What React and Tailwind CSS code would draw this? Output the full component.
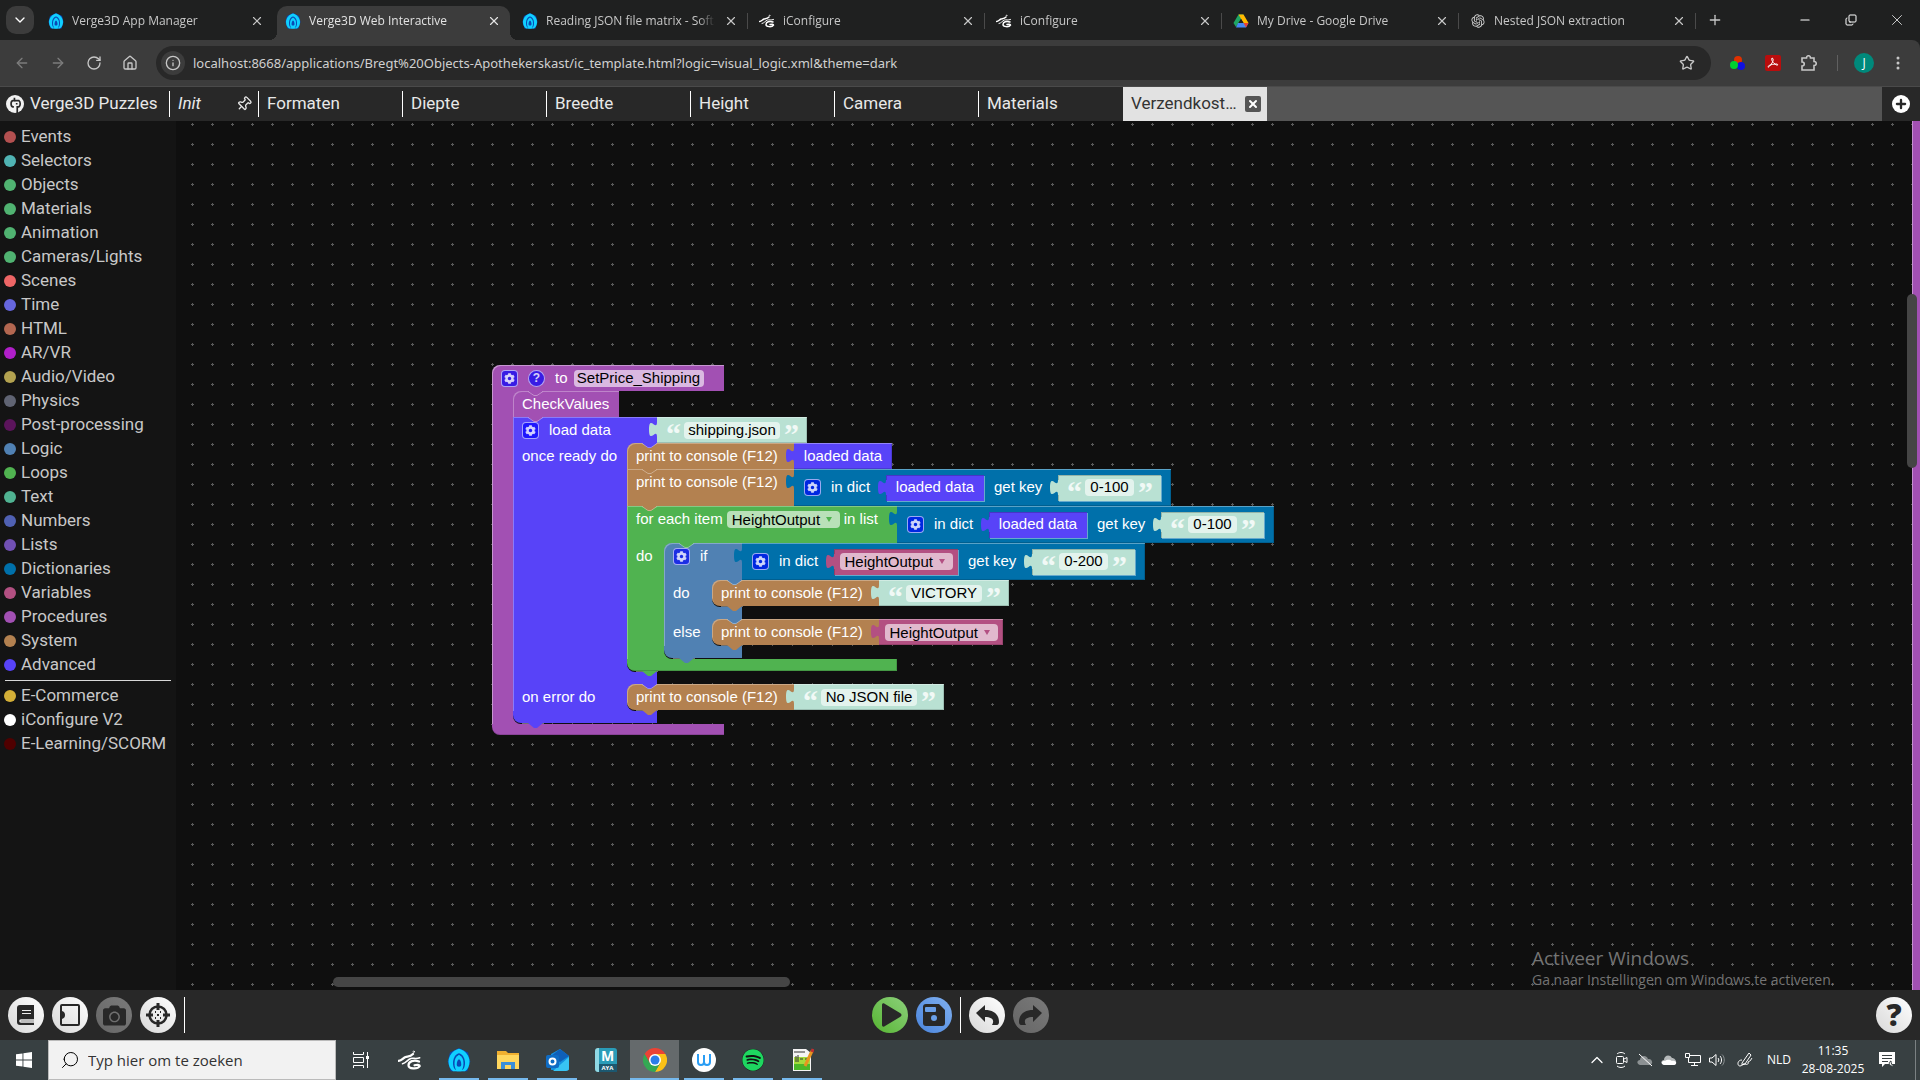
import { useState } from "react";
import {
  ArrowLeft,
  ArrowRight,
  ChevronDown,
  ChevronUp,
  Copy,
  House,
  Info,
  Minus,
  Pin,
  Plus,
  RotateCw,
  Search,
  Star,
  X,
} from "lucide-react";
import { FaCog, FaSpotify, FaCamera } from "react-icons/fa";
import { RiOpenaiFill } from "react-icons/ri";

const browserTabs = [
  { title: "Verge3D App Manager", icon: "verge" },
  { title: "Verge3D Web Interactive", icon: "verge" },
  { title: "Reading JSON file matrix - Soft8", icon: "verge" },
  { title: "iConfigure", icon: "iconfigure" },
  { title: "iConfigure", icon: "iconfigure" },
  { title: "My Drive - Google Drive", icon: "drive" },
  { title: "Nested JSON extraction", icon: "openai" },
];

const puzzleTabs = ["Formaten", "Diepte", "Breedte", "Height", "Camera", "Materials"];

const categories = [
  { name: "Events", color: "bg-[#b35050]" },
  { name: "Selectors", color: "bg-[#50b3b3]" },
  { name: "Objects", color: "bg-[#50b371]" },
  { name: "Materials", color: "bg-[#50b371]" },
  { name: "Animation", color: "bg-[#50b371]" },
  { name: "Cameras/Lights", color: "bg-[#50b371]" },
  { name: "Scenes", color: "bg-[#ee6666]" },
  { name: "Time", color: "bg-[#6666dd]" },
  { name: "HTML", color: "bg-[#b36750]" },
  { name: "AR/VR", color: "bg-[#b01fc9]" },
  { name: "Audio/Video", color: "bg-[#b3a250]" },
  { name: "Physics", color: "bg-[#606473]" },
  { name: "Post-processing", color: "bg-[#5b145b]" },
  { name: "Logic", color: "bg-[#5081b3]" },
  { name: "Loops", color: "bg-[#50b350]" },
  { name: "Text", color: "bg-[#50b392]" },
  { name: "Numbers", color: "bg-[#5061b3]" },
  { name: "Lists", color: "bg-[#7150b3]" },
  { name: "Dictionaries", color: "bg-[#0070aa]" },
  { name: "Variables", color: "bg-[#b35082]" },
  { name: "Procedures", color: "bg-[#a250b3]" },
  { name: "System", color: "bg-[#b38150]" },
  { name: "Advanced", color: "bg-[#5843f8]" },
];

const extraCategories = [
  { name: "E-Commerce", color: "bg-[#d4af37]" },
  { name: "iConfigure V2", color: "bg-white" },
  { name: "E-Learning/SCORM", color: "bg-[#500000]" },
];

/* ---------- logos ---------- */

const VergeLogo = ({ className }) => (
  <svg viewBox="0 0 32 32" className={className}>
    <path d="M16 0 L28 6 L31 18 L27 31 H5 L1 18 L4 6 Z" fill="#0a48b4" />
    <path d="M16 1 C24 3 30 10 30 18 C30 24 28 28 24 31 H8 C4 28 2 24 2 18 C2 10 8 3 16 1 Z" fill="#10d0ff" />
    <path d="M16 7 C21 8 24 14 24 20 C24 24 23 27 21 29 H11 C9 27 8 24 8 20 C8 14 11 8 16 7 Z" fill="#0a48b4" />
    <path d="M16 9 C20 11 22 15 22 20 C22 25 21 28 19 31 H13 C11 28 10 25 10 20 C10 15 12 11 16 9 Z" fill="#10d0ff" />
    <path d="M16 15 C18 16 19 19 19 22 C19 24 18 25 16 25 C14 25 13 24 13 22 C13 19 14 16 16 15 Z" fill="#0a48b4" />
  </svg>
);

const IConfigureLogo = ({ className }) => (
  <svg viewBox="0 0 32 32" className={className} fill="none" stroke="#fff" strokeLinecap="round">
    <path d="M1 17 C5 17 6 14 10 12 C13 11 16 12 20 8" strokeWidth="3" />
    <path d="M6 21 C11 20 12 16 17 14 C20 13 24 15 29 13" strokeWidth="2" />
    <path d="M28 18 C21 15 14 18 14 23 C14 28 26 29 29 24 C29 22 25 22 22 23" strokeWidth="3" />
    <circle cx="21" cy="5" r="1" strokeWidth="1" />
  </svg>
);

const DriveLogo = ({ className }) => (
  <svg viewBox="0 0 32 32" className={className}>
    <path d="M11 3 H21 L16 12 L6 28 L1 20 Z" fill="#1fa463" />
    <path d="M11 3 H21 L31 20 H21 Z" fill="#ffba00" />
    <path d="M10 20 H31 L26 29 H6 Z" fill="#4688f4" />
    <path d="M21 20 H31 L26 29 Z" fill="#ea4335" />
    <path d="M16 12 L21 20 H11 Z" fill="#1f2020" />
  </svg>
);

const ChromeLogo = ({ className }) => (
  <svg viewBox="0 0 48 48" className={className}>
    <path d="M3.2 12 A24 24 0 0 1 44.8 12 H24 L13.6 30 Z" fill="#ea4335" />
    <path d="M44.8 12 A24 24 0 0 1 24 48 L34.4 30 L24 12 Z" fill="#fbc116" />
    <path d="M24 48 A24 24 0 0 1 3.2 12 L13.6 30 H34.4 Z" fill="#34a853" />
    <circle cx="24" cy="24" r="12" fill="#fff" />
    <circle cx="24" cy="24" r="9" fill="#2b7de9" />
  </svg>
);

const PuzzleLogo = ({ className }) => (
  <svg viewBox="0 0 32 32" className={className}>
    <circle cx="16" cy="16" r="16" fill="#f2f2f2" />
    <path d="M15 5 V10 H12 C8 11 8 20 12 21 H14" fill="none" stroke="#282828" strokeWidth="3" />
    <path d="M15 10 H23 C26 12 26 19 23 21 H20 V32 M19 14 V17" fill="none" stroke="#282828" strokeWidth="3" />
  </svg>
);

const TabIcon = ({ name }) => {
  if (name === "verge") return <VergeLogo className="size-4 shrink-0" />;
  if (name === "iconfigure") return <IConfigureLogo className="size-4 shrink-0" />;
  if (name === "drive") return <DriveLogo className="size-4 shrink-0" />;
  return <RiOpenaiFill className="size-4 shrink-0 text-[#d0d0d0]" />;
};

/* ---------- browser chrome ---------- */

const BrowserTabs = () => (
  <div className="flex h-10 items-end bg-[#1f2020] text-[12px] text-[#c7c7c7]">
    <button
      aria-label="Search tabs"
      className="mx-[6px] mb-[6px] flex size-7 items-center justify-center rounded-[10px] bg-[#3c3c3c]"
    >
      <ChevronDown className="size-4 text-white" />
    </button>
    {browserTabs.map((tab, index) => {
      const active = index === 1;
      return (
        <div key={index} className="relative flex h-[34px] min-w-0 shrink basis-[237px] items-center pr-1">
          {active && (
            <>
              <span className="absolute -left-2 bottom-0 size-2 bg-[radial-gradient(circle_at_0_0,#1f2020_8px,#3c3c3c_8px)]" />
              <span className="absolute -right-1 bottom-0 size-2 bg-[radial-gradient(circle_at_100%_0,#1f2020_8px,#3c3c3c_8px)]" />
            </>
          )}
          <div
            className={
              active
                ? "flex h-full w-full items-center gap-2 rounded-t-[10px] bg-[#3c3c3c] px-2 pb-1 text-[#e3e3e3]"
                : "flex h-full w-full items-center gap-2 px-2 pb-1"
            }
          >
            <TabIcon name={tab.icon} />
            <span className="w-[172px] overflow-hidden whitespace-nowrap mask-r-from-90%">{tab.title}</span>
            <button aria-label="Close tab" className="flex size-4 shrink-0 items-center justify-center">
              <X className="size-[14px]" />
            </button>
          </div>
          {index > 1 && <span className="mb-1 h-4 w-px shrink-0 bg-[#4a4a4a]" />}
        </div>
      );
    })}
    <button aria-label="New tab" className="mb-3 ml-2 flex size-4 items-center justify-center">
      <Plus className="size-4" />
    </button>
    <div className="ml-auto flex h-full items-center text-white">
      <button aria-label="Minimize" className="flex h-full w-[46px] items-center justify-center">
        <Minus className="size-[14px]" />
      </button>
      <button aria-label="Restore" className="flex h-full w-[46px] items-center justify-center">
        <Copy className="size-3 -scale-x-100 rotate-180" />
      </button>
      <button aria-label="Close" className="flex h-full w-[46px] items-center justify-center">
        <X className="size-[18px]" strokeWidth={1} />
      </button>
    </div>
  </div>
);

const AddressBar = () => {
  const [url, setUrl] = useState(
    "localhost:8668/applications/Bregt%20Objects-Apothekerskast/ic_template.html?logic=visual_logic.xml&theme=dark"
  );

  return (
    <div className="flex h-[47px] items-center rounded-tr-[8px] border-b border-[#4a4a4a] bg-[#3c3c3c] px-[14px] text-[#c7c7c7]">
      <div className="flex w-[142px] gap-5">
        <button aria-label="Back" className="text-[#7c7c7c]"><ArrowLeft className="size-4" /></button>
        <button aria-label="Forward" className="text-[#7c7c7c]"><ArrowRight className="size-4" /></button>
        <button aria-label="Reload"><RotateCw className="size-4" /></button>
        <button aria-label="Home"><House className="size-4" /></button>
      </div>
      <div className="flex h-[34px] flex-1 items-center rounded-full bg-[#282828] pl-[5px] pr-4">
        <button aria-label="Site information" className="flex size-6 items-center justify-center rounded-full bg-[#3c3c3c]">
          <Info className="size-4" />
        </button>
        <input
          aria-label="Address"
          value={url}
          onChange={(e) => setUrl(e.target.value)}
          className="h-6 flex-1 bg-transparent px-2 font-['Noto_Sans',sans-serif] text-[13px] text-[#d0d0d0] outline-none"
        />
        <button aria-label="Bookmark"><Star className="size-4" /></button>
      </div>
      <div className="flex items-center gap-5 pl-[18px]">
        <svg viewBox="0 0 16 16" className="size-4">
          <circle cx="9" cy="5" r="4" fill="#e03000" />
          <circle cx="12" cy="11" r="4" fill="#1010e0" />
          <circle cx="5" cy="10" r="4" fill="#00d030" />
        </svg>
        <svg viewBox="0 0 16 16" className="size-4">
          <rect width="16" height="16" rx="2" fill="#b90d0d" />
          <path d="M7 3 C9 3 8 7 7 8 C5 11 3 13 3 12 C3 10 8 9 12 9 C14 10 12 11 10 9 C7 7 6 4 7 3" fill="none" stroke="#fff" />
        </svg>
        <svg viewBox="0 0 16 16" className="size-4" fill="none" stroke="currentColor" strokeWidth="1.6">
          <path d="M1 3 H5.5 C5.5 0 9.5 0 9.5 3 H13 V6.5 C16 6.5 16 10.5 13 10.5 V15 H1 V11 C4 11 4 7 1 7 Z" />
        </svg>
        <span className="h-4 w-px bg-[#606060]" />
        <span className="-mx-1 flex size-5 items-center justify-center rounded-full bg-[#00897b] text-[12px] text-white">J</span>
        <svg viewBox="0 0 16 16" className="size-4" fill="currentColor">
          <circle cx="8" cy="3" r="1.5" />
          <circle cx="8" cy="8" r="1.5" />
          <circle cx="8" cy="13" r="1.5" />
        </svg>
      </div>
    </div>
  );
};

/* ---------- puzzles editor ---------- */

const PuzzleHeader = () => (
  <header className="flex h-[34px] items-center bg-[#282828] font-[Roboto,sans-serif] text-[17px] text-[#e8e8e8]">
    <div className="flex w-[169px] shrink-0 items-center gap-[6px] pl-[6px]">
      <PuzzleLogo className="size-[18px]" />
      <h1>Verge3D Puzzles</h1>
    </div>
    <button className="flex h-[26px] w-[90px] shrink-0 items-center justify-between border-x border-white pl-2 pr-[6px] italic">
      Init
      <Pin className="size-4 rotate-45" />
    </button>
    {puzzleTabs.map((name, index) => (
      <button
        key={name}
        className={
          index < puzzleTabs.length - 1
            ? "h-[26px] w-36 shrink-0 border-r border-white pl-2 text-left"
            : "h-[26px] w-36 shrink-0 pl-2 text-left"
        }
      >
        {name}
      </button>
    ))}
    <div className="flex h-full w-36 shrink-0 items-center justify-between bg-[#e2e2e2] pl-2 pr-[6px] text-[#333]">
      Verzendkost…
      <button aria-label="Close puzzle tab" className="flex size-4 items-center justify-center rounded-[2px] bg-[#555] text-white">
        <X className="size-3" strokeWidth={4} />
      </button>
    </div>
    <div className="h-full flex-1 bg-[#555]" />
    <button aria-label="Add tab" className="mx-[10px] flex size-[18px] items-center justify-center rounded-full bg-white text-[#282828]">
      <Plus className="size-[14px]" strokeWidth={4} />
    </button>
  </header>
);

const Category = ({ item }) => (
  <li>
    <button className="flex h-6 items-center gap-[5px] pl-1">
      <span className={`size-3 rounded-full ${item.color}`} />
      {item.name}
    </button>
  </li>
);

const Sidebar = () => (
  <nav className="w-44 shrink-0 bg-[#141414] pt-1 font-[Roboto,sans-serif] text-[17px] text-[#c8c8c8]">
    <ul>
      {categories.map((item) => (
        <Category key={item.name} item={item} />
      ))}
    </ul>
    <hr className="mx-[5px] my-[3px] border-[#d8d8d8]" />
    <ul>
      {extraCategories.map((item) => (
        <Category key={item.name} item={item} />
      ))}
    </ul>
  </nav>
);

const GearIcon = () => (
  <span className="flex size-[17px] shrink-0 items-center justify-center rounded-[4px] border border-white/60 bg-[#0000ff]/65 text-white/80">
    <FaCog className="size-[11px]" />
  </span>
);

// bump of the block above that plugs into the top of a statement
const Notch = ({ color }) => (
  <svg viewBox="0 0 15 5" className={`absolute left-[15px] top-0 z-10 h-[5px] w-[15px] ${color}`}>
    <path d="M0 0 L6 5 H9 L15 0 Z" fill="currentColor" />
    <path d="M0 0.5 L6 4.5 H9 L15 0.5" fill="none" stroke="#fff" strokeOpacity="0.35" />
  </svg>
);

const Tab = () => (
  <svg viewBox="0 0 9 16" className="absolute -left-2 top-[5px] h-4 w-[9px]">
    <path d="M9 0 H8 C8 10 0 -8 0 7.5 S8 5 8 15 H9 Z" fill="currentColor" />
  </svg>
);

const Value = ({ color, nested, width, children }) => (
  <div
    className={`relative flex h-[26px] shrink-0 items-center ${color} ${width} ${
      nested
        ? "shadow-[1px_1px_0_rgba(255,255,255,0.4),inset_1px_1px_0_rgba(0,0,0,0.2)]"
        : "shadow-[inset_0_1px_0_rgba(255,255,255,0.35),inset_-1px_-1px_0_rgba(0,0,0,0.15)]"
    }`}
  >
    <Tab />
    {children}
  </div>
);

const LoadedData = ({ nested }) => (
  <Value color="bg-[#5843f8] text-[#5843f8]" width="w-[98px]" nested={nested}>
    <span className="w-full text-center text-white">loaded data</span>
  </Value>
);

const TextValue = ({ value, width, nested }) => (
  <Value color="bg-[#b9e1d3] text-[#b9e1d3]" width={width} nested={nested}>
    <div className="flex w-full items-center gap-1 px-[9px]">
      <span className="h-5 w-[14px] font-['Liberation_Serif',serif] text-[30px] font-bold leading-[28px] text-white/80">“</span>
      <input
        aria-label="Text"
        defaultValue={value}
        className="h-[17px] min-w-0 flex-1 rounded-[4px] bg-white/60 text-center text-black outline-none"
      />
      <span className="h-5 w-[14px] font-['Liberation_Serif',serif] text-[30px] font-bold leading-[28px] text-white/80">”</span>
    </div>
  </Value>
);

const VariableSelect = ({ color }) => (
  <span className="relative flex w-[113px] items-center">
    <select
      aria-label="Variable"
      className="h-[17px] w-full appearance-none rounded-[4px] bg-white/60 pl-[5px] leading-[17px] text-black outline-none"
    >
      <option>HeightOutput</option>
    </select>
    <svg viewBox="0 0 6 5" className={`pointer-events-none absolute right-2 h-[5px] w-[6px] ${color}`}>
      <path d="M0 0 H6 L3 5 Z" fill="currentColor" />
    </svg>
  </span>
);

const VariableValue = ({ nested }) => (
  <Value color="bg-[#b35082] text-[#b35082]" width="w-[124px]" nested={nested}>
    <div className="flex w-full justify-center">
      <VariableSelect color="text-[#b35082]" />
    </div>
  </Value>
);

const DictGet = ({ source, itemKey }) => (
  <div className="relative flex h-[37px] shrink-0 items-center bg-[#0070aa] px-[10px] text-[#0070aa] shadow-[inset_0_1px_0_rgba(255,255,255,0.35),inset_-1px_-1px_0_rgba(0,0,0,0.15)]">
    <Tab />
    <GearIcon />
    <span className="ml-[10px] mr-[15px] w-10 whitespace-nowrap text-white">in dict</span>
    {source}
    <span className="ml-[10px] mr-4 w-12 whitespace-nowrap text-white">get key</span>
    <TextValue value={itemKey} width="w-[103px]" nested />
  </div>
);

const Print = ({ notch, tall, corners = "", children }) => (
  <div className="relative flex">
    <div
      className={`relative w-[167px] shrink-0 bg-[#b38150] pl-[9px] leading-[26px] shadow-[inset_1px_1px_0_rgba(255,255,255,0.3)] ${
        tall ? "h-[37px]" : "h-[26px]"
      } ${corners}`}
    >
      <Notch color={notch} />
      print to console (F12)
    </div>
    {children}
  </div>
);

// hollow of a C-shaped block that holds its inner statements
const Cavity = ({ color, children }) => (
  <div className="relative pb-px">
    <span className={`absolute left-0 top-0 size-2 ${color}`} />
    <span className={`absolute bottom-0 left-0 size-2 ${color}`} />
    <span className="absolute bottom-0 left-0 h-3 w-6 rounded-bl-[8px] bg-[#0f0f0f]" />
    <div className="relative">{children}</div>
    <span className="absolute bottom-0 left-[9px] h-px w-[22px] bg-white/40" />
  </div>
);

const FootNotch = ({ color }) => (
  <svg viewBox="0 0 15 5" className={`absolute left-[15px] top-full z-10 h-[5px] w-[15px] ${color}`}>
    <path d="M0 0 L6 5 H9 L15 0 Z" fill="currentColor" />
  </svg>
);

const IfBlock = () => (
  <div className="relative">
    <Notch color="text-[#50b350]" />
    <div className="flex">
      <div className="flex h-[37px] w-[78px] shrink-0 rounded-tl-[8px] bg-[#5081b3] pl-[9px] shadow-[inset_1px_1px_0_rgba(255,255,255,0.3)]">
        <div className="flex h-[26px] items-center gap-[10px]">
          <GearIcon />
          if
        </div>
      </div>
      <DictGet source={<VariableValue nested />} itemKey="0-200" />
    </div>
    <div className="flex">
      <div className="w-12 bg-[#5081b3] pl-[9px] leading-[26px] shadow-[inset_1px_0_0_rgba(255,255,255,0.3)]">do</div>
      <Cavity color="bg-[#5081b3]">
        <Print notch="text-[#5081b3]" corners="rounded-l-[8px]">
          <TextValue value="VICTORY" width="w-[130px]" />
        </Print>
        <div className="relative"><FootNotch color="text-[#b38150]" /></div>
      </Cavity>
    </div>
    <div className="h-3 w-[78px] bg-[#5081b3] shadow-[inset_1px_0_0_rgba(255,255,255,0.3)]" />
    <div className="flex">
      <div className="w-12 bg-[#5081b3] pl-[9px] leading-[26px] shadow-[inset_1px_0_0_rgba(255,255,255,0.3)]">else</div>
      <Cavity color="bg-[#5081b3]">
        <Print notch="text-[#5081b3]" corners="rounded-l-[8px]">
          <VariableValue />
        </Print>
        <div className="relative"><FootNotch color="text-[#b38150]" /></div>
      </Cavity>
    </div>
    <div className="relative h-3 w-[78px] rounded-bl-[8px] bg-[#5081b3]">
      <FootNotch color="text-[#5081b3]" />
    </div>
  </div>
);

const ForEachBlock = () => (
  <div className="relative">
    <Notch color="text-[#b38150]" />
    <div className="flex">
      <div className="h-[37px] w-[270px] shrink-0 bg-[#50b350] pl-[9px] shadow-[inset_1px_1px_0_rgba(255,255,255,0.3)]">
        <div className="flex h-[26px] items-center gap-1">
          <span className="whitespace-nowrap">for each item</span>
          <VariableSelect color="text-[#50b350]" />
          <span className="whitespace-nowrap">in list</span>
        </div>
      </div>
      <DictGet source={<LoadedData nested />} itemKey="0-100" />
    </div>
    <div className="flex">
      <div className="w-[37px] bg-[#50b350] pl-[9px] leading-[26px] shadow-[inset_1px_0_0_rgba(255,255,255,0.3)]">do</div>
      <Cavity color="bg-[#50b350]">
        <IfBlock />
      </Cavity>
    </div>
    <div className="relative h-3 w-[270px] rounded-bl-[8px] bg-[#50b350] shadow-[inset_-1px_-1px_0_rgba(0,0,0,0.15)]">
      <FootNotch color="text-[#50b350]" />
    </div>
  </div>
);

const LoadDataBlock = () => (
  <div className="relative">
    <Notch color="text-[#a250b3]" />
    <div className="flex">
      <div className="flex h-[26px] w-36 shrink-0 items-center gap-[10px] bg-[#5843f8] pl-[9px] shadow-[inset_1px_1px_0_rgba(255,255,255,0.3)]">
        <GearIcon />
        load data
      </div>
      <TextValue value="shipping.json" width="w-[150px]" />
    </div>
    <div className="flex">
      <div className="w-[114px] shrink-0 bg-[#5843f8] pl-[9px] leading-[26px] shadow-[inset_1px_0_0_rgba(255,255,255,0.3)]">
        once ready do
      </div>
      <Cavity color="bg-[#5843f8]">
        <Print notch="text-[#5843f8]" corners="rounded-tl-[8px]">
          <LoadedData />
        </Print>
        <Print notch="text-[#b38150]" tall>
          <DictGet source={<LoadedData nested />} itemKey="0-100" />
        </Print>
        <ForEachBlock />
      </Cavity>
    </div>
    <div className="h-3 w-36 bg-[#5843f8] shadow-[inset_1px_0_0_rgba(255,255,255,0.3)]" />
    <div className="flex">
      <div className="w-[114px] shrink-0 bg-[#5843f8] pl-[9px] leading-[26px] shadow-[inset_1px_0_0_rgba(255,255,255,0.3)]">
        on error do
      </div>
      <Cavity color="bg-[#5843f8]">
        <Print notch="text-[#5843f8]" corners="rounded-l-[8px]">
          <TextValue value="No JSON file" width="w-[150px]" />
        </Print>
        <div className="relative"><FootNotch color="text-[#b38150]" /></div>
      </Cavity>
    </div>
    <div className="relative h-3 w-36 rounded-bl-[8px] bg-[#5843f8]">
      <FootNotch color="text-[#5843f8]" />
    </div>
  </div>
);

const ProcedureBlock = () => (
  <div className="absolute left-[316px] top-[244px] font-['Liberation_Sans',Arial,sans-serif] text-[15px] text-white">
    <div className="flex h-[26px] w-[232px] items-center gap-[10px] rounded-tl-[8px] bg-[#a250b3] pl-[9px] shadow-[inset_1px_1px_0_rgba(255,255,255,0.4)]">
      <GearIcon />
      <button
        aria-label="Help"
        className="flex size-[17px] items-center justify-center rounded-full border border-white/60 bg-[#0000ff]/65 text-[12px] font-bold leading-none text-white/80"
      >
        ?
      </button>
      <label className="flex items-center gap-[6px]">
        to
        <input
          defaultValue="SetPrice_Shipping"
          className="h-[17px] w-[130px] rounded-[4px] bg-white/60 text-center text-black outline-none"
        />
      </label>
    </div>
    <div className="flex">
      <div className="w-[21px] bg-[#a250b3] shadow-[inset_1px_0_0_rgba(255,255,255,0.4)]" />
      <Cavity color="bg-[#a250b3]">
        <div className="relative h-[26px] w-[106px] rounded-tl-[8px] bg-[#a250b3] pl-[9px] leading-[26px] shadow-[inset_1px_1px_0_rgba(255,255,255,0.3)]">
          <Notch color="text-[#a250b3]" />
          CheckValues
        </div>
        <LoadDataBlock />
      </Cavity>
    </div>
    <div className="h-[11px] w-[232px] rounded-bl-[8px] bg-[#a250b3] shadow-[inset_0_-1px_0_rgba(0,0,0,0.15)]" />
  </div>
);

const Workspace = () => (
  <main className="relative flex-1 overflow-hidden bg-[#0f0f0f]">
    <svg className="absolute inset-0 size-full">
      <defs>
        <pattern id="grid" x="6" y="-7" width="20" height="20" patternUnits="userSpaceOnUse">
          <path d="M9 10.5 H12 M10.5 9 V12" stroke="#5a5a5a" strokeWidth="1" />
        </pattern>
      </defs>
      <rect width="100%" height="100%" fill="url(#grid)" />
    </svg>
    <ProcedureBlock />
    <div className="absolute inset-y-0 right-0 w-2 border-l border-[#c58fd0] bg-[#a250b3]" />
    <div className="absolute right-[3px] top-[173px] h-[174px] w-[10px] rounded-full bg-[#454545]" />
    <div className="absolute bottom-[3px] left-[157px] h-[10px] w-[457px] rounded-full bg-[#454545]" />
    <div className="absolute bottom-0 right-[82px] w-[306px] text-[#747474]">
      <p className="text-[19px] leading-6">Activeer Windows</p>
      <p className="whitespace-nowrap text-[14px] leading-5">Ga naar Instellingen om Windows te activeren.</p>
    </div>
  </main>
);

const RoundButton = ({ label, color, children }) => (
  <button
    aria-label={label}
    className={`flex size-9 shrink-0 items-center justify-center rounded-full text-[#282828] ${color}`}
  >
    {children}
  </button>
);

const CurvedArrow = ({ className = "" }) => (
  <svg viewBox="0 0 24 24" className={`size-6 ${className}`}>
    <path d="M1 10 L10 2 V7 C18 7 24 11 24 19 C24 21 23 22 22 22 L17 22 C20 17 17 14 10 14 V19 Z" fill="currentColor" />
  </svg>
);

const light = "bg-linear-to-bl from-white to-[#d8d8d8]";
const muted = "bg-linear-to-bl from-[#7a7a7a] to-[#666]";

const EditorToolbar = () => (
  <div className="flex h-[50px] items-center justify-between bg-[#282828] px-2">
    <div className="flex flex-1 items-center gap-2">
      <RoundButton label="Library" color={light}>
        <svg viewBox="0 0 24 24" className="size-6">
          <path d="M6 2 H20 V22 H6 C4 22 3 21 3 19 V5 C3 3 4 2 6 2 Z" fill="currentColor" />
          <path d="M8 7.5 H17 M8 10.5 H17" stroke="#eee" strokeWidth="1.2" />
          <path d="M20 17 H7 C5.5 17 5.5 19 7 19 H20" fill="none" stroke="#eee" strokeWidth="1.4" />
        </svg>
      </RoundButton>
      <RoundButton label="Puzzle panel" color={light}>
        <svg viewBox="0 0 24 24" className="size-6" fill="none" stroke="currentColor" strokeWidth="2">
          <rect x="3" y="2" width="18" height="20" rx="1" />
          <path d="M3 8 C6 8 7 10 7 12 C7 14 6 16 3 16 Z" fill="currentColor" stroke="none" />
        </svg>
      </RoundButton>
      <RoundButton label="Snapshot" color={muted}>
        <FaCamera className="size-[23px]" />
      </RoundButton>
      <RoundButton label="Pick object" color={light}>
        <svg viewBox="0 0 24 24" className="size-6" fill="none" stroke="currentColor">
          <circle cx="12" cy="12" r="8.5" strokeWidth="2.5" />
          <path d="M12 0 V7 M12 17 V24 M0 12 H7 M17 12 H24" strokeWidth="3" />
          <path d="M9 9 H10 M14 9 H15 M9 15 H10 M14 15 H15 M11 12 H13" strokeWidth="2" />
        </svg>
      </RoundButton>
      <span className="h-9 w-px bg-white" />
    </div>
    <div className="flex items-center gap-2">
      <RoundButton label="Run" color="bg-linear-to-bl from-[#8cd07a] to-[#55b52c]">
        <svg viewBox="0 0 24 24" className="size-6">
          <path d="M4 2 V22 C4 24 6 24 7 23 L22 14 C24 13 24 11 22 10 L7 1 C6 0 4 0 4 2 Z" fill="currentColor" />
        </svg>
      </RoundButton>
      <RoundButton label="Save" color="bg-linear-to-bl from-[#80b0f0] to-[#4a84dc]">
        <svg viewBox="0 0 24 24" className="size-6">
          <path d="M4 1 H17 L23 7 V20 C23 22 22 23 20 23 H4 C2 23 1 22 1 20 V4 C1 2 2 1 4 1 Z" fill="currentColor" />
          <rect x="3" y="4" width="11" height="5" rx="1" fill="#6a9fe8" />
          <circle cx="12" cy="15" r="3" fill="#6a9fe8" />
        </svg>
      </RoundButton>
      <span className="h-9 w-px bg-white" />
      <RoundButton label="Undo" color={light}>
        <CurvedArrow />
      </RoundButton>
      <RoundButton label="Redo" color={muted}>
        <CurvedArrow className="-scale-x-100" />
      </RoundButton>
    </div>
    <div className="flex flex-1 justify-end">
      <RoundButton label="Help" color={light}>
        <span className="font-['Open_Sans',sans-serif] text-[30px] font-extrabold leading-9">?</span>
      </RoundButton>
    </div>
  </div>
);

/* ---------- windows taskbar ---------- */

const TaskItem = ({ label, open, active, children }) => (
  <button
    aria-label={label}
    className={`relative flex h-full w-[49px] items-center justify-center ${active ? "bg-[#656a6c]" : ""}`}
  >
    {children}
    {open && <span className={`absolute bottom-0 h-[2px] bg-[#76b9ed] ${active ? "w-full" : "w-10"}`} />}
  </button>
);

const Taskbar = () => (
  <footer className="flex h-10 items-center bg-[#384042] text-white">
    <button aria-label="Start" className="flex h-full w-12 items-center justify-center">
      <svg viewBox="0 0 16 16" className="size-4" fill="#fff">
        <path d="M0 2.3 L6.5 1.4 V7.5 H0 Z M7.4 1.3 L16 0 V7.5 H7.4 Z M0 8.4 H6.5 V14.6 L0 13.7 Z M7.4 8.4 H16 V16 L7.4 14.7 Z" />
      </svg>
    </button>
    <label className="flex h-full w-[288px] items-center gap-2 border border-[#bbb] bg-[#f2f2f2] pl-[11px] text-black">
      <Search className="size-5 -scale-x-100" strokeWidth={1.2} />
      <input
        placeholder="Typ hier om te zoeken"
        className="flex-1 bg-transparent text-[15px] outline-none placeholder:text-[#333]"
      />
    </label>
    <TaskItem label="Task view">
      <svg viewBox="0 0 16 16" className="size-4" fill="none" stroke="#fff">
        <path d="M0.5 0 V2.5 H10.5 V0 M0.5 16 V13.5 H10.5 V16 M0.5 5.5 H10.5 V10.5 H0.5 Z M14.5 0 V16" />
        <rect x="13" y="4" width="3" height="3" fill="#fff" stroke="none" />
      </svg>
    </TaskItem>
    <TaskItem label="iConfigure"><IConfigureLogo className="size-6" /></TaskItem>
    <TaskItem label="Verge3D" open><VergeLogo className="size-6" /></TaskItem>
    <TaskItem label="Explorer" open>
      <svg viewBox="0 0 24 24" className="size-6">
        <path d="M1 3 H10 L12 5 H23 V21 H1 Z" fill="#f0b030" />
        <path d="M1 7 H23 V21 H1 Z" fill="#ffd75e" />
        <path d="M5 21 V14 H19 V21 H15 V17 H9 V21 Z" fill="#3a8fd8" />
      </svg>
    </TaskItem>
    <TaskItem label="Outlook" open>
      <svg viewBox="0 0 24 24" className="size-6">
        <path d="M6 6 L15 1 L24 8 V22 H6 Z" fill="#1490df" />
        <path d="M15 1 L24 8 L15 14 L6 8 Z" fill="#0f5fb8" />
        <path d="M24 9 V20 C24 22 23 23 21 23 H8 L24 9 Z" fill="#38c4f4" />
        <rect x="1" y="7" width="13" height="13" rx="2" fill="#0f6cc4" />
        <circle cx="7.5" cy="13.5" r="3" fill="none" stroke="#fff" strokeWidth="2" />
      </svg>
    </TaskItem>
    <TaskItem label="Maya">
      <span className="flex h-6 w-[22px] flex-col items-center justify-between rounded-[3px] border-l-4 border-[#8fd8e4] bg-[#2a9cb8]">
        <span className="text-[14px] font-bold leading-4">M</span>
        <span className="w-full bg-[#1c5870] text-center text-[6px] font-bold leading-2">AYA</span>
      </span>
    </TaskItem>
    <TaskItem label="Chrome" open active><ChromeLogo className="size-6" /></TaskItem>
    <TaskItem label="W" open>
      <svg viewBox="0 0 24 24" className="size-6">
        <circle cx="12" cy="12" r="12" fill="#fff" />
        <path d="M6 6 V14 C6 18 12 18 12 14 V7 V14 C12 18 18 18 18 14 V6" fill="none" stroke="#2a9df4" strokeWidth="2" />
      </svg>
    </TaskItem>
    <TaskItem label="Spotify" open>
      <span className="flex size-[22px] items-center justify-center rounded-full bg-[#111]">
        <FaSpotify className="size-[22px] text-[#1ed760]" />
      </span>
    </TaskItem>
    <TaskItem label="Notepad++" open>
      <svg viewBox="0 0 24 24" className="size-6">
        <path d="M3 1 H16 L21 5 V23 H3 Z" fill="#f4f4f4" />
        <path d="M4 9 H20 V22 H4 Z" fill="#a4dc3c" />
        <path d="M4 16 H20 V22 H4 Z" fill="#4cb828" />
        <path d="M4 4 H15 M8 7 V14 M6 8 V14 M10 11 H13 M15 11 H17" stroke="#333" />
        <path d="M22 3 L15 18" stroke="#e89420" strokeWidth="3" />
        <path d="M23 1 L22 4" stroke="#c03030" strokeWidth="3" />
      </svg>
    </TaskItem>
    <div className="ml-auto flex h-full items-center">
      <div className="flex items-center gap-2">
        <ChevronUp className="-mx-[2px] size-5" strokeWidth={1.5} />
        <svg viewBox="0 0 16 16" className="size-4" fill="none" stroke="#fff">
          <rect x="3.5" y="4.5" width="7" height="7" rx="1" />
          <path d="M11 7 L14 5.5 V10.5 L11 9 M4 2 C6 0 10 0 12 2 M4 14 C6 16 10 16 12 14" />
        </svg>
        <svg viewBox="0 0 16 16" className="size-4">
          <path d="M3 13 C-1 12 0 8 3 8 C3 4 9 2 11 7 C15 6 17 12 13 13 Z" fill="#8c9193" />
          <path d="M2 2 L15 14" stroke="#fff" />
        </svg>
        <svg viewBox="0 0 16 16" className="size-4">
          <path d="M3 13 C-1 12 0 8 3 8 C3 3 9 2 11 6 C15 6 17 12 13 13 Z" fill="#b5b9ba" />
          <path d="M3 13 C-1 12 1 8 4 9 C7 7 9 8 11 9 C15 8 17 12 13 13 Z" fill="#fff" />
        </svg>
        <svg viewBox="0 0 16 16" className="size-4" fill="none" stroke="#fff">
          <path d="M4.5 3.5 H15.5 V10.5 H3.5 V6 M9.5 10.5 V13.5 M6 13.5 H13 M0.5 1.5 H4.5 V5.5 H0.5 Z" />
        </svg>
        <svg viewBox="0 0 16 16" className="size-4" fill="none" stroke="#fff">
          <path d="M0.5 6 H3 L7 2.5 V13.5 L3 10 H0.5 Z M9 6 C10 7 10 9 9 10 M11 4 C13 6 13 10 11 12" />
          <path d="M13 2.5 C16 5 16 11 13 13.5" stroke="#8c9193" />
        </svg>
      </div>
      <svg viewBox="0 0 16 16" className="ml-3 size-4" fill="none" stroke="#fff">
        <path d="M5 11 L12 1 L14 3 L8 12 L5 13 Z M5 8 C0 8 0 14 3 14 C6 14 5 11 8 12 C10 13 12 12 11 10 C14 9 14 7 15 6" />
      </svg>
      <span className="ml-[14px] text-[12px]">NLD</span>
      <div className="ml-3 flex w-[60px] flex-col items-center whitespace-nowrap text-[12px] leading-[18px]">
        <p>11:35</p>
        <p>28-08-2025</p>
      </div>
      <button aria-label="Notifications" className="ml-4 mr-5">
        <svg viewBox="0 0 16 16" className="size-4">
          <path d="M0 0 H16 V12 H6 L3 15 V12 H0 Z" fill="#fff" />
          <path d="M3 3.5 H13 M3 6.5 H13 M3 9.5 H9" stroke="#384042" />
          <path d="M12 9 C9 10 10 15 15 14 C13 13 12 12 12 9" fill="#fff" stroke="#384042" />
        </svg>
      </button>
      <span className="mr-1 h-full w-px bg-[#7b8183]" />
    </div>
  </footer>
);

export default function App() {
  return (
    <div className="flex h-screen flex-col overflow-hidden bg-[#1f2020] font-['Open_Sans','Segoe_UI',sans-serif]">
      <BrowserTabs />
      <AddressBar />
      <PuzzleHeader />
      <div className="flex min-h-0 flex-1">
        <Sidebar />
        <Workspace />
      </div>
      <EditorToolbar />
      <Taskbar />
    </div>
  );
}
